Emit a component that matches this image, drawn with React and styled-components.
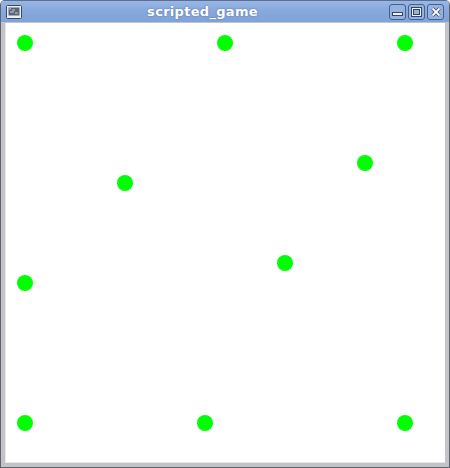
import React from "react";
import styled, { createGlobalStyle } from "styled-components";

const GlobalStyle = createGlobalStyle`
  html, body {
    margin: 0;
    padding: 0;
    background: #ffffff;
  }
`;

const Window = styled.div`
  width: 450px;
  height: 468px;
  box-sizing: border-box;
  display: flex;
  flex-direction: column;
  background: #c8c8cc;
  border: 1px solid #5d6470;
  border-top: none;
  border-radius: 5px 5px 0 0;
  overflow: hidden;
`;

const TitleBar = styled.div`
  height: 22px;
  flex-shrink: 0;
  display: flex;
  align-items: center;
  padding: 0 5px 0 5px;
  background-color: #87a9dc;
  background-image: linear-gradient(#98b7e6, #87a9dc 45%, #7fa3d8);
  border-top: 1px solid #5d6e90;
  box-sizing: border-box;
`;

const Title = styled.div`
  flex: 1;
  text-align: center;
  padding-right: 6px;
  color: #ffffff;
  font-family: "DejaVu Sans", sans-serif;
  font-size: 13px;
  font-weight: bold;
  letter-spacing: 0.3px;
  text-shadow: 0 0 2px #4d6aa0;
`;

const Buttons = styled.div`
  display: flex;
  gap: 2px;
`;

const WinButton = styled.div`
  width: 17px;
  height: 16px;
  box-sizing: border-box;
  border: 1px solid #4c5f86;
  border-radius: 3px;
  background: #95b3e2;
  display: flex;
  align-items: center;
  justify-content: center;
`;

const Body = styled.div`
  flex: 1;
  display: flex;
  padding: 1px 4px 4px 4px;
  background: #c4c4c8;
`;

const Canvas = styled.div`
  position: relative;
  flex: 1;
  background: #ffffff;
  box-shadow: inset 1px -1px 0 #e8e8ea;
`;

const Dot = styled.div`
  position: absolute;
  width: 16px;
  height: 16px;
  margin: -8px 0 0 -8px;
  border-radius: 50%;
  background: #00ff00;
`;

const dots = [
  [20, 20],
  [220, 20],
  [400, 20],
  [120, 160],
  [360, 140],
  [280, 240],
  [20, 260],
  [20, 400],
  [200, 400],
  [400, 400],
];

const AppIcon = () => (
  <svg width="16" height="14" viewBox="0 0 16 14">
    <rect x="0.5" y="0.5" width="15" height="13" rx="1" fill="#e8eef8" stroke="#3b4660" />
    <rect x="2.5" y="2.5" width="11" height="8" fill="#5a6478" />
    <path d="M3 4h2M6 5h3M4 7h4M9 8h3" stroke="#c8d0e0" strokeWidth="1" />
  </svg>
);

const App = () => (
  <>
    <GlobalStyle />
    <Window>
      <TitleBar>
        <AppIcon />
        <Title>scripted_game</Title>
        <Buttons>
          <WinButton>
            <svg width="11" height="10" viewBox="0 0 11 10">
              <rect x="0.5" y="5.5" width="10" height="3" fill="#eef3fb" stroke="#34456a" />
            </svg>
          </WinButton>
          <WinButton>
            <svg width="11" height="10" viewBox="0 0 11 10">
              <rect x="0.5" y="0.5" width="10" height="9" fill="none" stroke="#34456a" />
              <rect x="1.5" y="1.5" width="8" height="7" fill="none" stroke="#eef3fb" />
              <rect x="2.5" y="2.5" width="6" height="5" fill="none" stroke="#34456a" />
            </svg>
          </WinButton>
          <WinButton>
            <svg width="10" height="10" viewBox="0 0 10 10">
              <path d="M1.5 1.5L8.5 8.5M8.5 1.5L1.5 8.5" stroke="#34456a" strokeWidth="3.4" />
              <path d="M1.5 1.5L8.5 8.5M8.5 1.5L1.5 8.5" stroke="#ffffff" strokeWidth="1.8" />
            </svg>
          </WinButton>
        </Buttons>
      </TitleBar>
      <Body>
        <Canvas>
          {dots.map(([x, y], i) => (
            <Dot key={i} style={{ left: x, top: y }} />
          ))}
        </Canvas>
      </Body>
    </Window>
  </>
);

export default App;
